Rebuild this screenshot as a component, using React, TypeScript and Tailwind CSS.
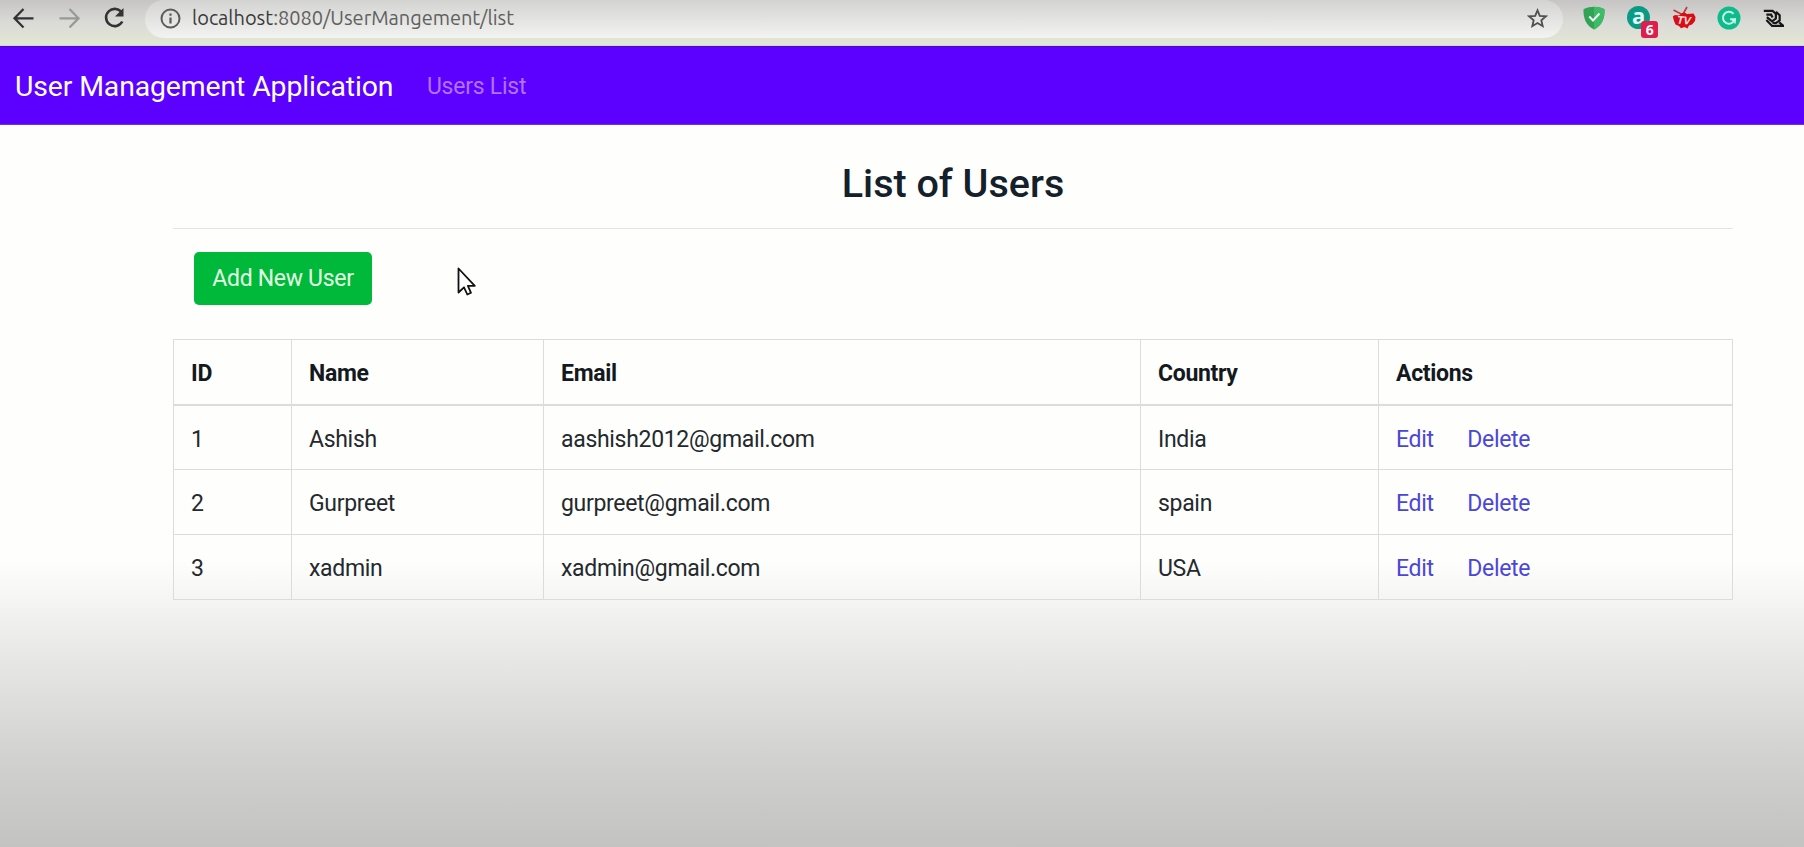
const users = [
  { id: 1, name: "Ashish", email: "aashish2012@gmail.com", country: "India" },
  { id: 2, name: "Gurpreet", email: "gurpreet@gmail.com", country: "spain" },
  { id: 3, name: "xadmin", email: "xadmin@gmail.com", country: "USA" },
];

const headings = ["ID", "Name", "Email", "Country", "Actions"];

function Extensions() {
  return (
    <div className="ml-[20px] flex items-start pt-[6px] font-['Open_Sans',sans-serif]">
      <svg className="mr-[22px] h-[24px] w-[22px]" viewBox="0 0 22 24">
        <path d="M11 .8C14.2.8 18 1.6 21.5 3.2C21.8 12 19.5 18.8 11 23.6C2.5 18.8.2 12 .5 3.2C4 1.6 7.8.8 11 .8Z" fill="#31a356" />
        <path d="M11 .8C14.2.8 18 1.6 21.5 3.2C21.8 12 19.5 18.8 11 23.6Z" fill="#3dbb66" />
        <path d="M6.3 10.5L10 14.5L16.5 7.5" fill="none" stroke="#effff2" strokeWidth="2" />
      </svg>
      <div className="relative mr-[22px] h-[32px] w-[23px]">
        <div className="flex size-[23px] items-center justify-center rounded-full bg-[#0b9a83] text-[22px] leading-none font-bold text-[#dffff8]">
          <span className="-mt-[5px]">a</span>
        </div>
        <div className="absolute top-[15px] left-[14px] flex h-[17px] w-[17px] items-center justify-center rounded-[3px] bg-[#e01e4e] text-[14px] leading-none font-bold text-white">
          6
        </div>
      </div>
      <svg className="mr-[21px] h-[24px] w-[24px]" viewBox="0 0 24 24">
        <path d="M11 9L1.500 4M10.500 9L15 1" fill="none" stroke="#b3403f" strokeWidth="1.700" />
        <path d="M.8 10.500L3 9L7 9.500L10 7L12.500 6.500L15 8L21.500 7.500L23.500 11L23 15L20 18.500L17 19.500L15.500 22.500L12.500 21L9 22.300L7 20L3.500 18.500L2 15Z" fill="#d90d15" />
        <text x="5" y="18" transform="rotate(4 12 14)" fontFamily="Liberation Sans, sans-serif" fontSize="11" fontStyle="italic" fontWeight="bold" fill="#ffe3e3">TV</text>
      </svg>
      <svg className="mr-[22px] h-[24px] w-[24px]" viewBox="0 0 24 24">
        <circle cx="12" cy="12" r="11.500" fill="#0fbb8c" />
        <path d="M16.500 7.800A6 6 0 1 0 17.800 13.200H13" fill="none" stroke="#c2f7e5" strokeWidth="2" />
        <path d="M15 14.500L18.200 13.200L18 17.500" fill="none" stroke="#c2f7e5" strokeWidth="1.500" />
      </svg>
      <svg className="mt-[3px] h-[19px] w-[21px]" viewBox="0 0 22 20" fill="none" stroke="#161616" strokeWidth="2.300">
        <path d="M.8 2H10L13.500 5V10L9.500 13L4 8.500" />
        <path d="M3.500 6H8.500L10 9" />
        <path d="M13.500 3L17.500 6.500V12L13.500 14.800L9.800 14.500" />
        <path d="M3.500 11.500L9.500 17.800H21.500L17 14" />
      </svg>
    </div>
  );
}

function BrowserBar() {
  return (
    <header className="flex h-[46px] w-full shrink-0 items-start border-b border-[#d9d3e6] bg-linear-to-b from-[#c6c5c3] via-[#dadad7] via-50% to-[#e3e7d3] font-['Ubuntu','Noto_Sans',sans-serif]">
      <svg className="mt-[6px] ml-[11px] size-6 shrink-0" viewBox="0 0 24 24" fill="none" stroke="#333" strokeWidth="2.3">
        <path d="M22.500 12.300H4M12.500 3L3.500 12.300L12.500 21.500" />
      </svg>
      <svg className="mt-[6px] ml-[21px] size-6 shrink-0" viewBox="0 0 24 24" fill="none" stroke="#999996" strokeWidth="2.3">
        <path d="M3.500 12.300H22M13.500 3L22.500 12.300L13.500 21.500" />
      </svg>
      <svg className="mt-[6px] ml-[22px] size-6 shrink-0" viewBox="0 0 24 24" fill="none" stroke="#333" strokeWidth="2.6">
        <path d="M20 7A8.600 8.600 0 1 0 20.300 15.500" />
        <path d="M21.500 2V10.500H13Z" fill="#333" stroke="none" />
      </svg>
      <div className="ml-[19px] flex h-[38px] w-[1418px] shrink-0 items-start rounded-[19px] bg-linear-to-b from-[#d3d3d1] to-[#f3f3f1]">
        <svg className="mt-[8px] ml-[15px] size-[21px] shrink-0" viewBox="0 0 21 21" fill="none" stroke="#5b5b59" strokeWidth="2">
          <circle cx="10.5" cy="10.5" r="9" />
          <path d="M10.5 9.500V15.500M10.500 5.500V7.700" strokeWidth="2.2" />
        </svg>
        <div className="mt-[4px] ml-[11px] flex-1 text-[20px] leading-7 tracking-[-0.03px] whitespace-nowrap text-[#5f605e]">
          <span className="text-[#3a3b3b]">localhost</span>:8080/UserMangement/list
        </div>
        <svg className="mt-[8px] mr-[15px] size-[21px]" viewBox="0 0 21 21" fill="none" stroke="#4f504f" strokeWidth="1.8">
          <path d="M10.500 2.300L12.800 7.800L18.900 8.300L14.300 12.300L15.700 18.200L10.500 15L5.300 18.200L6.700 12.300L2.100 8.300L8.200 7.800Z" />
        </svg>
      </div>
      <Extensions />
    </header>
  );
}

export default function App() {
  return (
    <div className="relative flex h-[847px] w-[1804px] flex-col overflow-hidden bg-[#fefefd] bg-[linear-gradient(to_bottom,#fefefd_0,#fefefd_560px,#f5f5f4_600px,#ebebea_640px,#dededd_700px,#d3d3d1_750px,#cacac8_800px,#c3c3c2_847px)] font-['Roboto',sans-serif] text-[23px] tracking-[-0.31px] text-[#24292d]">
      <BrowserBar />
      <nav className="flex h-[79px] shrink-0 items-center border-y border-t-[#4d0bc0] border-b-[#6a35d0] bg-[#5c00ff] pl-[15px] leading-8">
        <a className="mt-[3px] text-[28.4px] tracking-[-0.12px] text-white">User Management Application</a>
        <a className="mt-[2px] ml-[33.500px] tracking-[-0.25px] text-[#b173ff]">Users List</a>
      </nav>
      <main className="ml-[173px] flex w-[1560px] flex-col">
        <h1 className="mt-[34px] text-center text-[39.5px] leading-[50px] font-medium tracking-normal text-[#14202a]">List of Users</h1>
        <hr className="mt-[19px] border-[#e4e4e4]" />
        <div className="mt-[23px] pl-[21px]">
          <button className="block h-[53px] w-[178px] rounded-[5px] bg-[#00b83a] pt-[2px] text-[#e2ffe4]">Add New User</button>
        </div>
        <table className="mt-[33.500px] w-[1560px] table-fixed border-collapse border border-[#dcdcdd] leading-[32px]">
          <colgroup>
            <col className="w-[118px]" />
            <col className="w-[252px]" />
            <col className="w-[597px]" />
            <col className="w-[238px]" />
            <col />
          </colgroup>
          <thead>
            <tr className="h-[66px]">
              {headings.map((heading) => (
                <th key={heading} className="border border-b-2 border-[#dcdcdd] px-[17px] pt-[4px] text-left font-bold text-[#14191e]">
                  {heading}
                </th>
              ))}
            </tr>
          </thead>
          <tbody>
            {users.map((user) => (
              <tr key={user.id} className="h-[64.700px]">
                <td className="border border-[#dcdcdd] px-[17px] pt-[4px]">{user.id}</td>
                <td className="border border-[#dcdcdd] px-[17px] pt-[4px]">{user.name}</td>
                <td className="border border-[#dcdcdd] px-[17px] pt-[4px]">{user.email}</td>
                <td className="border border-[#dcdcdd] px-[17px] pt-[4px]">{user.country}</td>
                <td className="border border-[#dcdcdd] px-[17px] pt-[4px] text-[#4b46d8]">
                  <a>Edit</a>
                  <a className="ml-[33.500px]">Delete</a>
                </td>
              </tr>
            ))}
          </tbody>
        </table>
      </main>
      <svg className="absolute top-[266px] left-[456px] h-[31px] w-[21px]" viewBox="0 0 21 31">
        <path d="M2.500 2.500V26.500L8 21.300L11.300 28.500L15 26.800L11.900 19.800H18.800Z" fill="#fff" stroke="#111" strokeWidth="1.800" strokeLinejoin="round" />
      </svg>
    </div>
  );
}
